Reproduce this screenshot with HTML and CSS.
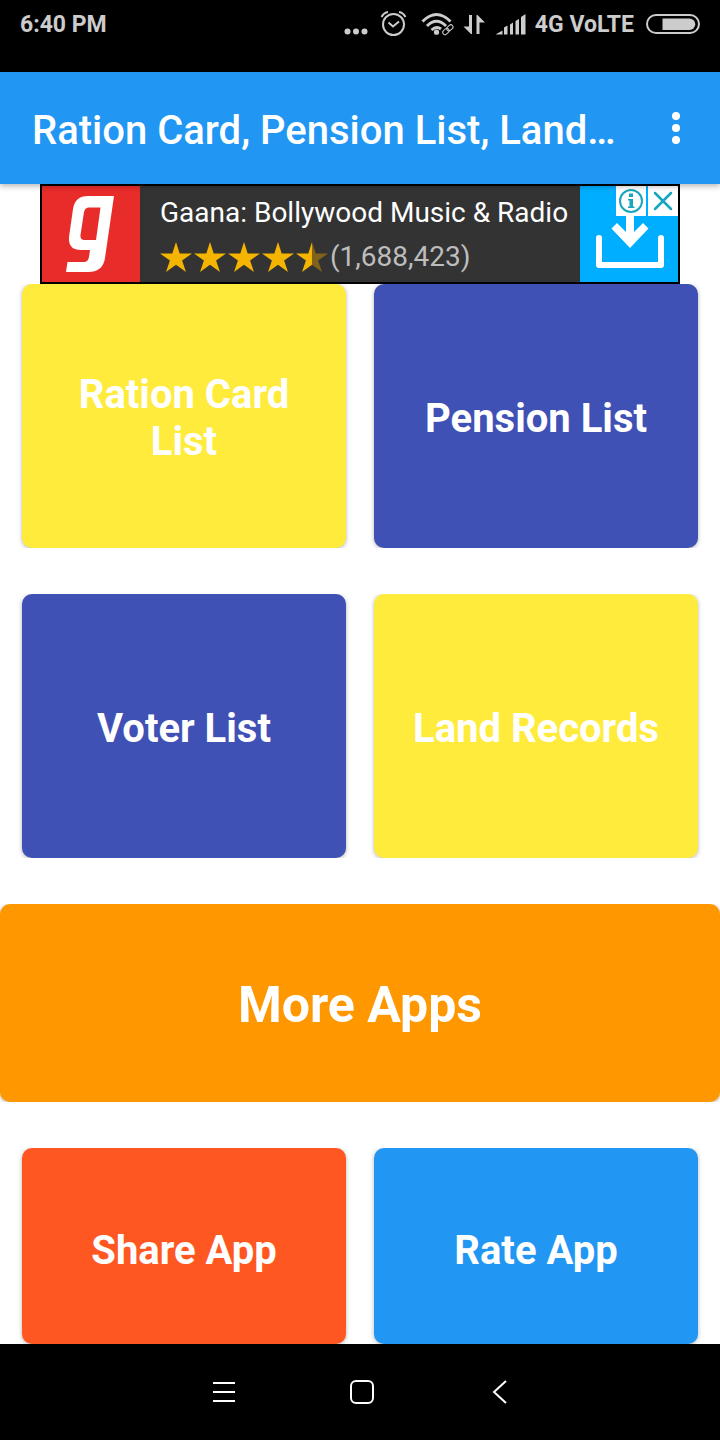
FILE: index.html
```html
<!DOCTYPE html>
<html lang="en">
<head>
    <meta charset="UTF-8">
    <meta name="viewport" content="width=device-width, initial-scale=1.0">
    <title>Ration Card, Pension List, Land…</title>
    <link rel="stylesheet" href="styles.css">
</head>
<body>
    <!-- Status bar -->
    <div class="status-bar">
        <span class="status-time">6:40 PM</span>
        <svg class="status-icons" width="184" height="48" viewBox="342 0 184 48" aria-hidden="true">
            <!-- more notifications -->
            <circle cx="346.500" cy="31.500" r="3"/>
            <circle cx="355" cy="31.500" r="3"/>
            <circle cx="363.500" cy="31.500" r="3"/>
            <!-- alarm -->
            <g class="line">
                <circle cx="392.500" cy="24.500" r="10.500"/>
                <path d="M387.500 22.500l4.500 4 6-5M380.500 17q2.500-4.500 6.500-5M404.500 17q-2.500-4.500-6.500-5"/>
            </g>
            <!-- wifi -->
            <g class="line wifi">
                <path d="M421.500 21.500q14-14 28 0M426 26q9.500-9.500 19 0M430.500 30q5-4.500 9.500-1"/>
            </g>
            <circle cx="435.500" cy="32.200" r="2.600"/>
            <g class="line link">
                <rect x="-5" y="-2.200" width="7" height="4.400" rx="2.200" transform="translate(446 30.500) rotate(-42)"/>
                <rect x="-1" y="-2.200" width="7" height="4.400" rx="2.200" transform="translate(447 29.500) rotate(-42)"/>
            </g>
            <!-- data arrows -->
            <path d="M468 15h3v19h-1l-7.500-7.500h5.500zM475.500 34V15h1l7.500 7.500h-5.500V34z"/>
            <!-- signal -->
            <path d="M494.500 34.500l7-4v4zM503 34.500v-7l3.500-2v9zM509 34.500V24.500l3-2v12zM514.500 34.500V21l3.500-2v15.500zM520 34.500V17l4.500-3v20.500z"/>
        </svg>
        <span class="network">4G VoLTE</span>
        <svg class="battery" width="54" height="48" viewBox="646 0 54 48" aria-hidden="true">
            <rect class="line" x="647" y="15" width="52" height="18" rx="9"/>
            <path d="M662.500 18.500h27a5.700 5.700 0 0 1 0 11.500h-27z"/>
        </svg>
    </div>

    <!-- App bar -->
    <header class="header">
        <h1 class="header-title">Ration Card, Pension List, Land…</h1>
        <button class="menu-button" aria-label="More options">
            <svg width="8" height="32" viewBox="0 0 8 32">
                <circle cx="4" cy="4" r="4"/>
                <circle cx="4" cy="16" r="4"/>
                <circle cx="4" cy="28" r="4"/>
            </svg>
        </button>
    </header>

    <main class="content">
        <!-- Ad banner -->
        <div class="ad">
            <svg class="ad-logo" width="98" height="96" viewBox="0 0 98 96" role="img" aria-label="Gaana">
                <path fill-rule="evenodd" d="M72 10H46Q33 10 31 23L27 51Q26 64 39 64H48L47 71Q46 76 42 76H25.500L24 86H46Q61 86 63 72ZM58.500 21.500L54 54H42.500Q38 54 38.500 49L42 26Q43 21.500 47 21.500Z"/>
            </svg>
            <div class="ad-text">
                <a class="ad-title" href="#">Gaana: Bollywood Music &amp; Radio</a>
                <div class="ad-rating">
                    <svg width="168" height="30" viewBox="0 0 168 30" role="img" aria-label="4.5 stars">
                        <defs>
                            <path id="star" d="M16 0l3.700 11.500H32l-9.900 7.100L26 30l-10-7.200L6 30l3.900-11.400L0 11.500h12.300z"/>
                            <linearGradient id="half">
                                <stop offset="0.500" stop-color="#f4b400"/>
                                <stop offset="0.500" stop-color="#80621a"/>
                            </linearGradient>
                        </defs>
                        <use href="#star" fill="#f4b400"/>
                        <use href="#star" x="34" fill="#f4b400"/>
                        <use href="#star" x="68" fill="#f4b400"/>
                        <use href="#star" x="102" fill="#f4b400"/>
                        <use href="#star" x="136" fill="url(#half)"/>
                    </svg>
                    <span>(1,688,423)</span>
                </div>
            </div>
            <button class="ad-install" aria-label="Install">
                <svg width="98" height="96" viewBox="0 0 98 96">
                    <path fill="none" stroke="#fff" stroke-width="6" stroke-linecap="round" stroke-linejoin="round" d="M19 52v27h62V52"/>
                    <path fill="#fff" d="M46 28h8v18l9-9 5.500 5.500L50 62 31.500 42.500 37 37l9 9z"/>
                </svg>
            </button>
            <div class="ad-choices">
                <button aria-label="Ad info">
                    <svg width="30" height="30" viewBox="0 0 30 30">
                        <circle cx="15" cy="15" r="11" fill="none" stroke="#17a6bd" stroke-width="2"/>
                        <path fill="#17a6bd" d="M13 7.500h4v3.500h-4zM12 13h5v7.500h1.500V22H12v-1.500h1.500v-6H12z"/>
                    </svg>
                </button>
                <button aria-label="Close ad">
                    <svg width="30" height="30" viewBox="0 0 30 30">
                        <path fill="none" stroke="#17a6bd" stroke-width="2.500" stroke-linecap="round" d="M7 7l16 16M23 7L7 23"/>
                    </svg>
                </button>
            </div>
        </div>

        <!-- Main menu -->
        <div class="row">
            <button class="card yellow">Ration Card List</button>
            <button class="card indigo">Pension List</button>
        </div>
        <div class="row">
            <button class="card indigo">Voter List</button>
            <button class="card yellow">Land Records</button>
        </div>
        <button class="card more-apps">More Apps</button>
        <div class="row">
            <button class="card small share">Share App</button>
            <button class="card small rate">Rate App</button>
        </div>
    </main>

    <!-- Navigation bar -->
    <nav class="nav-bar">
        <button aria-label="Recent apps">
            <svg width="28" height="28" viewBox="0 0 28 28"><path d="M3 5h22M3 14h22M3 23h22"/></svg>
        </button>
        <button aria-label="Home">
            <svg width="28" height="28" viewBox="0 0 28 28"><rect x="3" y="3" width="22" height="22" rx="5"/></svg>
        </button>
        <button aria-label="Back">
            <svg width="28" height="28" viewBox="0 0 28 28"><path d="M20 3L8 14l12 11"/></svg>
        </button>
    </nav>
</body>
</html>
```

FILE: styles.css
```css
* {
    margin: 0;
    padding: 0;
    box-sizing: border-box;
    font-family: Roboto, "Liberation Sans", sans-serif;
}

body {
    background-color: white;
    min-height: 100vh;
    display: flex;
    flex-direction: column;
}

button {
    border: none;
    background: none;
    cursor: pointer;
}

svg {
    display: block;
}

.status-bar {
    height: 72px;
    padding: 0 20px 24px;
    background-color: black;
    color: #ccc;
    fill: #ccc;
    display: flex;
    align-items: center;
    font-size: 23px;
    font-weight: 700;
    line-height: 48px;
}

.status-time,
.network {
    padding-top: 2px;
}

.status-icons {
    margin-left: auto;
}

.status-bar .line {
    fill: none;
    stroke: #ccc;
    stroke-width: 2;
}

.status-bar .wifi {
    stroke-width: 3;
}

.status-bar .link {
    stroke-width: 1;
}

.network {
    margin: 0 12px 0 8px;
}

.header {
    position: relative;
    z-index: 1;
    height: 112px;
    padding: 0 32px;
    background-color: #2196f3;
    color: white;
    display: flex;
    align-items: center;
    justify-content: space-between;
    box-shadow: 0 2px 6px rgba(0, 0, 0, 0.3);
}

.header-title {
    font-size: 40px;
    font-weight: 500;
    line-height: 48px;
    padding-top: 6px;
    white-space: nowrap;
    overflow: hidden;
    text-overflow: ellipsis;
}

.menu-button {
    padding: 8px;
    fill: white;
}

.content {
    flex: 1;
}

.ad {
    position: relative;
    width: 640px;
    max-width: 100%;
    height: 100px;
    margin: 0 auto;
    border: 2px solid black;
    background-color: #333;
    display: flex;
}

.ad-logo {
    background-color: #e72c2a;
    fill: white;
    flex-shrink: 0;
}

.ad-text {
    flex: 1;
    padding: 11px 0 0 20px;
    white-space: nowrap;
}

.ad-title {
    display: block;
    color: white;
    font-size: 28px;
    line-height: 32px;
    text-decoration: none;
}

.ad-rating {
    display: flex;
    align-items: center;
    gap: 2px;
    margin-top: 12px;
    color: #bdbdbd;
    font-size: 28px;
    line-height: 32px;
}

.ad-install {
    background-color: #00aeff;
    flex-shrink: 0;
}

.ad-choices {
    position: absolute;
    top: 0;
    right: 0;
    display: flex;
    gap: 2px;
}

.ad-choices button {
    background-color: white;
}

.row {
    display: grid;
    grid-template-columns: 1fr 1fr;
    gap: 28px;
    padding: 0 22px;
    margin-bottom: 46px;
}

.row:last-child {
    margin-bottom: 0;
}

.card {
    min-height: 264px;
    padding: 4px 32px 0;
    border-radius: 10px;
    color: white;
    font-size: 40px;
    font-weight: 700;
    line-height: 47px;
    box-shadow: 0 1px 4px rgba(0, 0, 0, 0.3);
    /* keep the shadow on the sides only */
    clip-path: inset(0 -6px);
}

.yellow {
    background-color: #ffeb3b;
}

.indigo {
    background-color: #3f51b5;
}

.more-apps {
    display: block;
    width: 100%;
    min-height: 198px;
    margin-bottom: 46px;
    background-color: #ff9800;
    font-size: 50px;
}

.small {
    min-height: 196px;
    padding-top: 8px;
}

.share {
    background-color: #ff5722;
}

.rate {
    background-color: #2196f3;
}

.nav-bar {
    height: 96px;
    padding-left: 4px;
    background-color: black;
    display: flex;
    align-items: center;
    justify-content: center;
    gap: 90px;
}

.nav-bar button {
    padding: 10px;
}

.nav-bar svg {
    fill: none;
    stroke: white;
    stroke-width: 2;
}
```
